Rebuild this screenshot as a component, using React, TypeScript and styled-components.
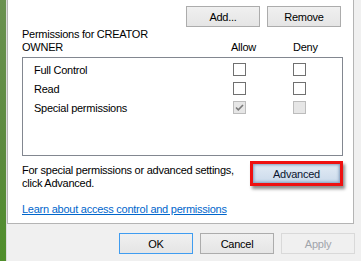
import React from "react";
import styled, { createGlobalStyle, css } from "styled-components";

const GlobalStyle = createGlobalStyle`
  html, body { margin: 0; padding: 0; background: #f0f0f0; }
  body {
    font-family: "Liberation Sans", Arial, sans-serif;
    font-size: 11px;
    letter-spacing: -0.25px;
    color: #000;
  }
`;

const Window = styled.div`
  display: flex;
  width: 361px;
  height: 261px;
  overflow: hidden;
  background: #f0f0f0;
`;

const GreenEdge = styled.div`
  flex: none;
  width: 7px;
  box-sizing: border-box;
  border-right: 1px solid #dcdcdc;
  background: linear-gradient(to bottom, #6a9150 0%, #5b8a3d 60%, #4f8e2a 100%);
`;

const Main = styled.div`
  flex: 1;
  display: flex;
  flex-direction: column;
`;

const Panel = styled.div`
  width: 347px;
  height: 224px;
  box-sizing: border-box;
  background: #fff;
  border: 1px solid #b4b4b4;
  border-top: none;
  padding: 6px 10px 0 14px;
  display: flex;
  flex-direction: column;
`;

const TopButtons = styled.div`
  display: flex;
  justify-content: flex-end;
  gap: 7px;
  padding-right: 2px;
`;

const Button = styled.button<{ $default?: boolean }>`
  width: 74px;
  height: 21px;
  box-sizing: border-box;
  padding: 0;
  border: 1px solid #acacac;
  background: linear-gradient(to bottom, #f0f0f0, #e5e5e5);
  font: inherit;
  letter-spacing: inherit;
  color: #000;
  ${(p) =>
    p.$default &&
    css`
      border-color: #3f9cf0;
    `}
  &:disabled {
    border-color: #d9d9d9;
    background: #f0f0f0;
    color: #a0a4ab;
  }
`;

const Heading = styled.div`
  display: grid;
  grid-template-columns: 209px 62px auto;
  align-items: end;
  margin-top: 1px;
  line-height: 13px;
`;

const Title = styled.div`
  max-width: 140px;
`;

const List = styled.div`
  margin-top: 3px;
  height: 99px;
  box-sizing: border-box;
  border: 1px solid #828790;
  padding-top: 2px;
`;

const Row = styled.div`
  display: grid;
  grid-template-columns: 1fr 13px 13px;
  column-gap: 47px;
  align-items: center;
  height: 19px;
  padding: 0 36px 0 11px;
`;

const Box = styled.span<{ $disabled?: boolean }>`
  display: flex;
  align-items: center;
  justify-content: center;
  width: 13px;
  height: 13px;
  box-sizing: border-box;
  border: 1px solid #707070;
  background: #fff;
  ${(p) =>
    p.$disabled &&
    css`
      border-color: #bcbcbc;
      background: #e6e6e6;
    `}
`;

const InfoRow = styled.div`
  display: flex;
  justify-content: space-between;
  align-items: flex-start;
  margin-top: 5px;
`;

const InfoText = styled.div`
  padding-top: 3px;
  line-height: 13px;
`;

const AdvancedFrame = styled.div`
  display: flex;
  width: 93px;
  height: 25px;
  box-sizing: border-box;
  border: 3px solid #ee1111;
  box-shadow: 2px 3px 3px rgba(0, 0, 0, 0.45);
`;

const AdvancedButton = styled.div`
  flex: 1;
  display: flex;
  align-items: center;
  justify-content: center;
  background: linear-gradient(to bottom, #e2ebf5, #cbdaeb);
  box-shadow: inset 0 0 3px 1px #7f9dbd;
  color: #0a1530;
`;

const Link = styled.a`
  margin-top: 13px;
  line-height: 13px;
  color: #0066cc;
  text-decoration: underline;
  align-self: flex-start;
`;

const Footer = styled.div`
  display: flex;
  justify-content: flex-end;
  gap: 7px;
  padding: 9px 6px 0 0;
`;

const Check = () => (
  <svg width="11" height="11" viewBox="0 0 11 11">
    <path d="M2 5.5 L4.3 7.8 L9 3" fill="none" stroke="#7a7a7a" strokeWidth="1.6" />
  </svg>
);

type Perm = { name: string; allow: boolean; deny: boolean; disabled?: boolean };

const perms: Perm[] = [
  { name: "Full Control", allow: false, deny: false },
  { name: "Read", allow: false, deny: false },
  { name: "Special permissions", allow: true, deny: false, disabled: true },
];

export default function App() {
  return (
    <>
      <GlobalStyle />
      <Window>
        <GreenEdge />
        <Main>
          <Panel>
            <TopButtons>
              <Button>Add...</Button>
              <Button>Remove</Button>
            </TopButtons>
            <Heading>
              <Title>Permissions for CREATOR OWNER</Title>
              <span>Allow</span>
              <span>Deny</span>
            </Heading>
            <List>
              {perms.map((p) => (
                <Row key={p.name}>
                  <span>{p.name}</span>
                  <Box $disabled={p.disabled}>{p.allow && <Check />}</Box>
                  <Box $disabled={p.disabled}>{p.deny && <Check />}</Box>
                </Row>
              ))}
            </List>
            <InfoRow>
              <InfoText>
                For special permissions or advanced settings,
                <br />
                click Advanced.
              </InfoText>
              <AdvancedFrame>
                <AdvancedButton>Advanced</AdvancedButton>
              </AdvancedFrame>
            </InfoRow>
            <Link href="#">Learn about access control and permissions</Link>
          </Panel>
          <Footer>
            <Button $default>OK</Button>
            <Button>Cancel</Button>
            <Button disabled>Apply</Button>
          </Footer>
        </Main>
      </Window>
    </>
  );
}
